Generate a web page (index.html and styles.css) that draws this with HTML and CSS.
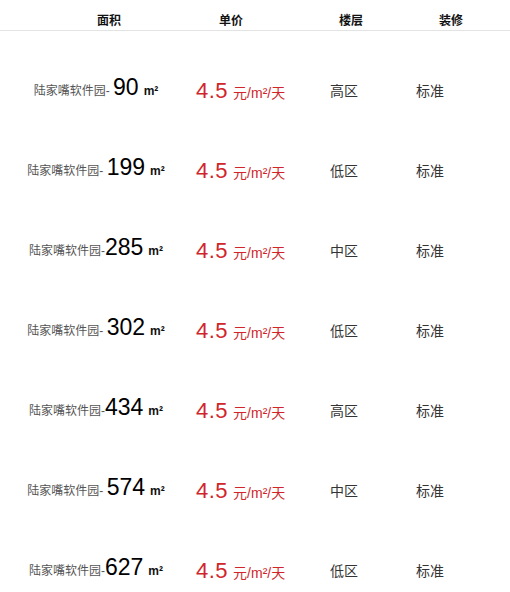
FILE: index.html
```html
<!DOCTYPE html>
<html lang="zh-CN">
<head>
<meta charset="utf-8">
<title>房源列表</title>
<link rel="stylesheet" href="styles.css">
</head>
<body>
<div class="list">
  <div class="head">
    <div class="hcell">面积</div>
    <div class="hcell">单价</div>
    <div class="hcell">楼层</div>
    <div class="hcell">装修</div>
  </div>
  <div class="rows">
    <div class="row">
      <div class="area"><span class="name">陆家嘴软件园- </span><span class="num">90</span><span class="unit">m²</span></div>
      <div class="price"><span class="pnum">4.5</span><span class="punit">元/m²/天</span></div>
      <div class="floor">高区</div>
      <div class="deco">标准</div>
    </div>
    <div class="row">
      <div class="area"><span class="name">陆家嘴软件园- </span><span class="num">199</span><span class="unit">m²</span></div>
      <div class="price"><span class="pnum">4.5</span><span class="punit">元/m²/天</span></div>
      <div class="floor">低区</div>
      <div class="deco">标准</div>
    </div>
    <div class="row">
      <div class="area"><span class="name">陆家嘴软件园-</span><span class="num">285</span><span class="unit">m²</span></div>
      <div class="price"><span class="pnum">4.5</span><span class="punit">元/m²/天</span></div>
      <div class="floor">中区</div>
      <div class="deco">标准</div>
    </div>
    <div class="row">
      <div class="area"><span class="name">陆家嘴软件园- </span><span class="num">302</span><span class="unit">m²</span></div>
      <div class="price"><span class="pnum">4.5</span><span class="punit">元/m²/天</span></div>
      <div class="floor">低区</div>
      <div class="deco">标准</div>
    </div>
    <div class="row">
      <div class="area"><span class="name">陆家嘴软件园-</span><span class="num">434</span><span class="unit">m²</span></div>
      <div class="price"><span class="pnum">4.5</span><span class="punit">元/m²/天</span></div>
      <div class="floor">高区</div>
      <div class="deco">标准</div>
    </div>
    <div class="row">
      <div class="area"><span class="name">陆家嘴软件园- </span><span class="num">574</span><span class="unit">m²</span></div>
      <div class="price"><span class="pnum">4.5</span><span class="punit">元/m²/天</span></div>
      <div class="floor">中区</div>
      <div class="deco">标准</div>
    </div>
    <div class="row">
      <div class="area"><span class="name">陆家嘴软件园-</span><span class="num">627</span><span class="unit">m²</span></div>
      <div class="price"><span class="pnum">4.5</span><span class="punit">元/m²/天</span></div>
      <div class="floor">低区</div>
      <div class="deco">标准</div>
    </div>
  </div>
</div>
</body>
</html>
```

FILE: styles.css
```css
html, body {
  margin: 0;
  padding: 0;
  background: #fff;
}
body {
  font-family: "Liberation Sans", "Noto Sans CJK SC", sans-serif;
  color: #333;
}
.head {
  display: grid;
  grid-template-columns: 122px 120px 100px 1fr;
  padding-left: 97px;
  padding-top: 12px;
  height: 18px;
  line-height: 18px;
  font-size: 12px;
  font-weight: bold;
  color: #111;
  border-bottom: 1px solid #e3e3e3;
}
.rows {
  padding-top: 20px;
}
.row {
  display: grid;
  grid-template-columns: 192px 138px 86px 1fr;
  height: 80px;
  align-items: center;
}
.area {
  text-align: center;
  line-height: 26px;
  padding-bottom: 5px;
  white-space: nowrap;
}
.name {
  font-size: 12px;
  color: #555;
}
.num {
  font-size: 23px;
  color: #000;
}
.unit {
  font-size: 12px;
  font-weight: bold;
  color: #111;
  margin-left: 5px;
}
.price {
  padding-left: 4px;
  padding-top: 2px;
  line-height: 26px;
  white-space: nowrap;
  color: #d0262b;
}
.pnum {
  font-size: 22px;
  letter-spacing: 0.5px;
}
.punit {
  font-size: 14px;
  margin-left: 5px;
}
.floor, .deco {
  font-size: 14px;
  line-height: 20px;
  color: #333;
}
```
